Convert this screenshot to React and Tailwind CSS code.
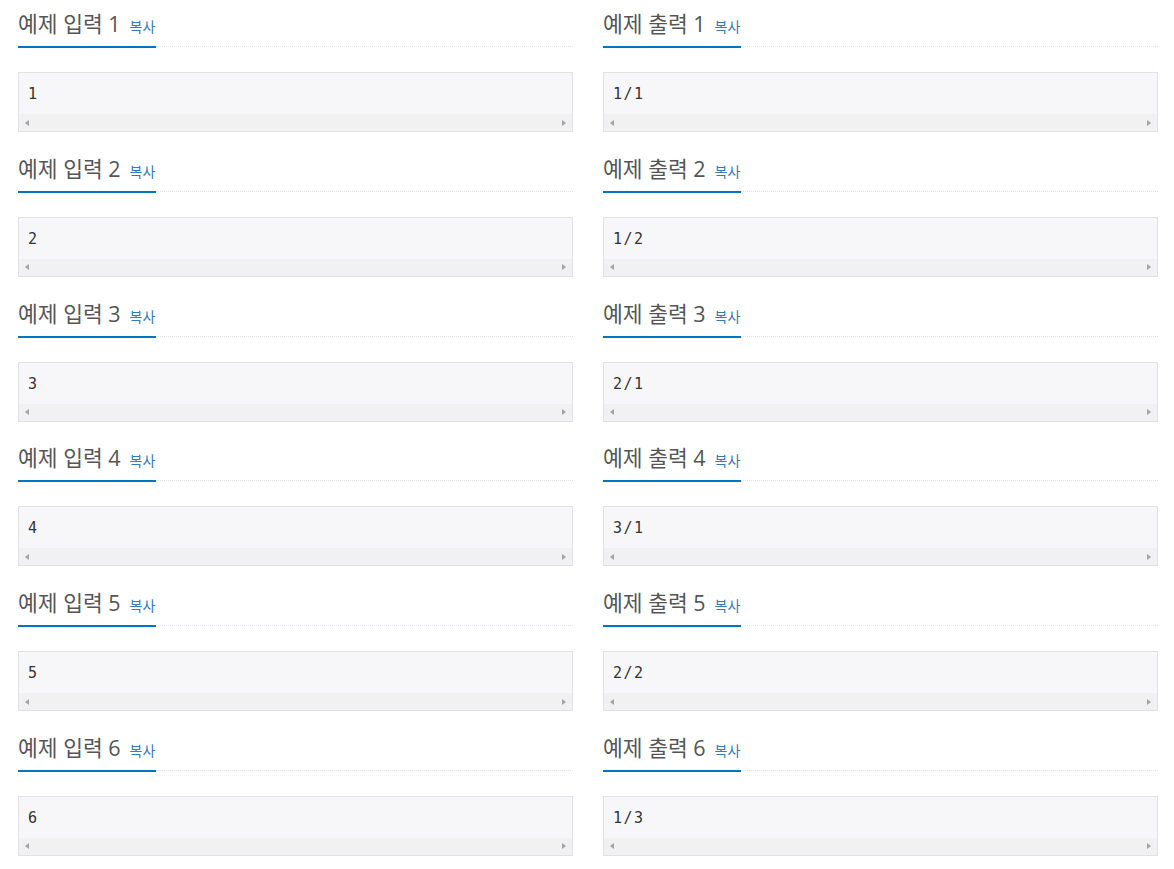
const samples = [
  { input: "1", output: "1/1" },
  { input: "2", output: "1/2" },
  { input: "3", output: "2/1" },
  { input: "4", output: "3/1" },
  { input: "5", output: "2/2" },
  { input: "6", output: "1/3" },
];

function Headline({ title }) {
  return (
    <div className="flex items-end">
      <h2 className="shrink-0 border-b-2 border-[#0076c0] pb-[8px] pr-[1px] text-[21.5px] leading-[28px] text-[#555] font-normal">
        {title}
        <button className="ml-[9px] text-[14px] leading-[14px] text-[#337ab7] align-baseline">복사</button>
      </h2>
      <div className="flex-1 mb-[1px] border-b border-dotted border-[#dfe5ee]"></div>
    </div>
  );
}

function SampleBox({ text }) {
  return (
    <div className="mt-[24px] border border-[#e1e1e8] bg-[#f7f7f9]">
      <pre className="h-[41px] px-[9px] pt-[11px] text-[15px] leading-[20px] tracking-[1.5px] text-[#333] font-['DejaVu_Sans_Mono','Liberation_Mono',monospace]">
        {text}
      </pre>
      <div className="flex h-[17px] items-center justify-between bg-[#f1f1f1] px-[6px]">
        <span className="h-0 w-0 border-y-[3.5px] border-r-[4px] border-y-transparent border-r-[#a3a3a3]"></span>
        <span className="h-0 w-0 border-y-[3.5px] border-l-[4px] border-y-transparent border-l-[#a3a3a3]"></span>
      </div>
    </div>
  );
}

export default function App() {
  return (
    <div className="min-h-screen bg-white pl-[18px] pr-[16px] font-['Open_Sans','Noto_Sans_CJK_KR',sans-serif]">
      {samples.map((s, i) => (
        <div key={i} className="grid grid-cols-2 gap-x-[30px] pt-[10px] pb-[12.8px]">
          <div>
            <Headline title={`예제 입력 ${i + 1}`} />
            <SampleBox text={s.input} />
          </div>
          <div>
            <Headline title={`예제 출력 ${i + 1}`} />
            <SampleBox text={s.output} />
          </div>
        </div>
      ))}
    </div>
  );
}
